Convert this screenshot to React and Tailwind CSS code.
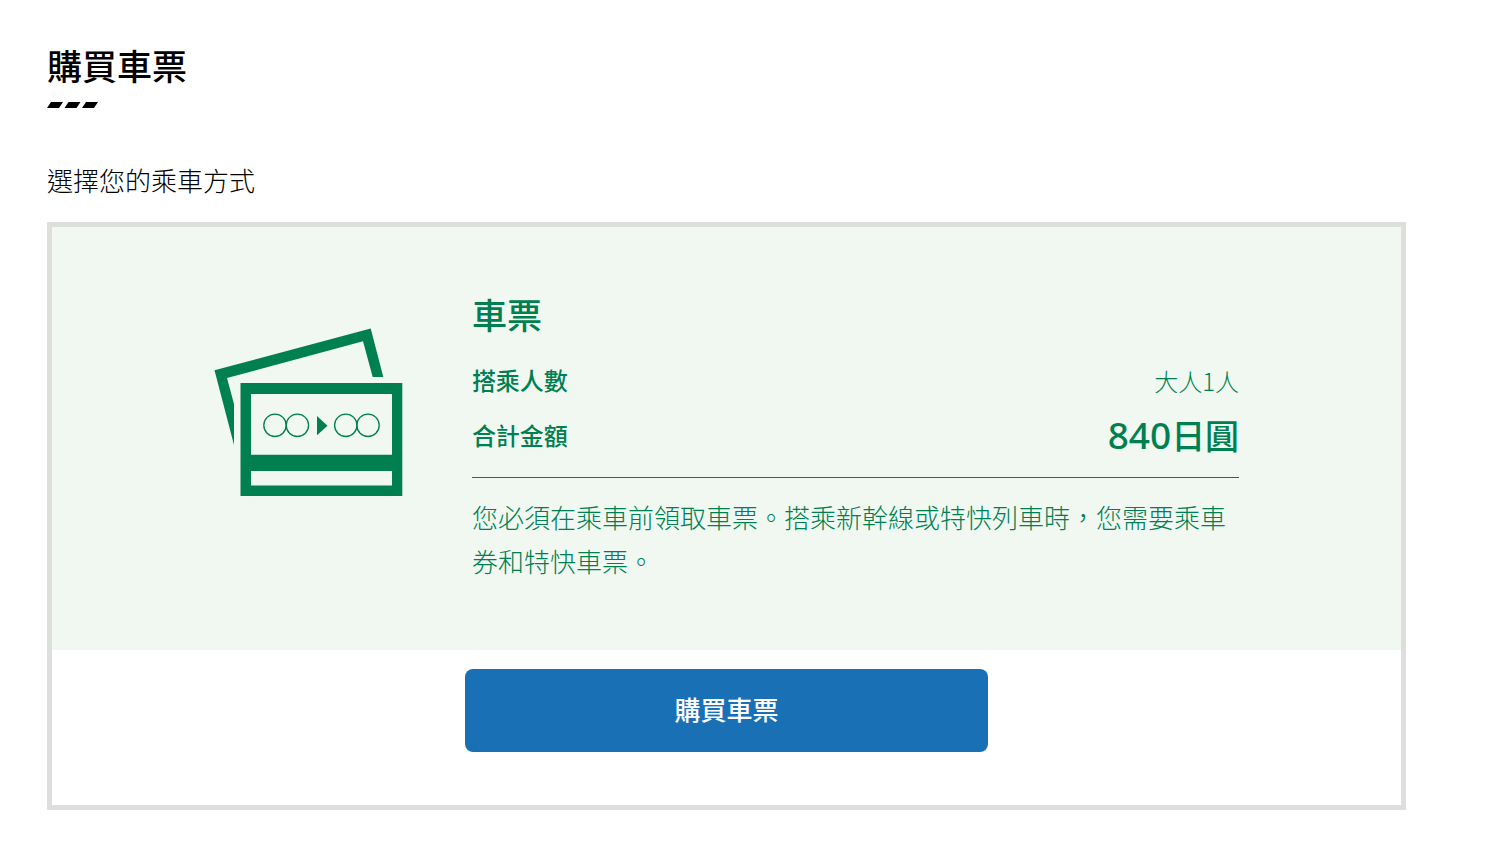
import React from "react";

function SlashMark() {
  return (
    <svg width="52" height="6" viewBox="0 0 52 6" className="block" aria-hidden="true">
      <path d="M4 0H16L12 6H0Z M21.5 0H33.5L29.5 6H17.5Z M39 0H51L47 6H35Z" fill="#000" />
    </svg>
  );
}

function TicketIcon() {
  return (
    <svg width="190" height="170" viewBox="0 0 190 170" className="block shrink-0" aria-hidden="true">
      <g fill="#007f51">
        <path d="M0.5 42.3 156.7 0.5 169.3 49H158.7L149 13.3 13 50 20 76V117Z" />
        <path fillRule="evenodd" d="M26.5 55H188.3V168H26.5Z M37 66V126.700H178V66Z M37 143V157.500H178V143Z" />
        <path d="M103 88 113.500 97.700 103 107.300Z" />
      </g>
      <g fill="none" stroke="#007f51" strokeWidth="1.300">
        <circle cx="61" cy="97.300" r="11.200" />
        <circle cx="83.400" cy="97.300" r="11.200" />
        <circle cx="131.800" cy="97.300" r="11.200" />
        <circle cx="154" cy="97.300" r="11.200" />
      </g>
    </svg>
  );
}

export default function App() {
  return (
    <main className="pt-10 pr-[94px] pb-10 pl-[47px] font-['Noto_Sans_CJK_TC',sans-serif] text-black">
      <h1 className="text-[35px] leading-[50px] font-medium">購買車票</h1>
      <div className="mt-3">
        <SlashMark />
      </div>
      <h2 className="mt-[54px] text-[26px] leading-9 font-light">選擇您的乘車方式</h2>

      <section className="mt-6 border-5 border-[#dddfdd] bg-white font-['Noto_Sans','Noto_Sans_CJK_TC',sans-serif]">
        <div className="flex items-start gap-[68px] bg-[#f0f8f1] px-[12%] pt-16 pb-[66px] text-[#007f51]">
          <div className="pt-[37px]">
            <TicketIcon />
          </div>
          <div className="min-w-0 flex-1">
            <h3 className="text-[35px] leading-[50px] font-medium">車票</h3>
            <dl className="mt-5">
              <div className="flex items-center justify-between">
                <dt className="text-2xl leading-10 font-medium">搭乘人數</dt>
                <dd className="font-['Noto_Sans_CJK_TC',sans-serif] text-2xl leading-10 font-light">大人1人</dd>
              </div>
              <div className="mt-2 flex items-center justify-between">
                <dt className="text-2xl leading-10 font-medium">合計金額</dt>
                <dd className="text-[34px] leading-[52px] font-medium">
                  <span className="text-[37px] leading-[52px]">840</span>日圓
                </dd>
              </div>
            </dl>
            <hr className="mt-[15px] h-px border-0 bg-[#007f51]" />
            <p className="mt-[18px] text-[26px] leading-[44px] font-light">
              您必須在乘車前領取車票。搭乘新幹線或特快列車時，您需要乘車券和特快車票。
            </p>
          </div>
        </div>
        <div className="flex justify-center pt-[19px] pb-[53px]">
          <button
            type="button"
            className="h-[83px] w-full max-w-[523px] rounded-lg bg-[#1a70b5] text-[26px] font-medium text-white"
          >
            購買車票
          </button>
        </div>
      </section>
    </main>
  );
}
